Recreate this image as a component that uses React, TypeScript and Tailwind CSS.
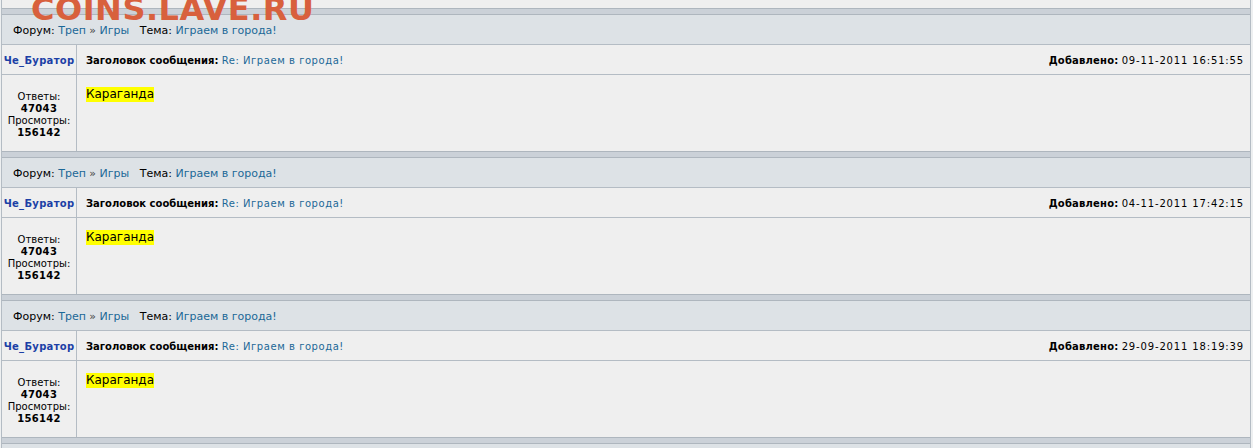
import { FC } from "react";

const posts = [
  { date: "09-11-2011 16:51:55" },
  { date: "04-11-2011 17:42:15" },
  { date: "29-09-2011 18:19:39" },
];

const Post: FC<{ date: string }> = ({ date }) => (
  <div>
    {/* separator bar */}
    <div className="h-[7px] border-y border-[#aeb6be] bg-[#cbd1d8]" />
    <div className="h-[30px] flex items-center pl-[11px] pt-[4px] bg-[#dde2e6] text-[11px] text-black border-b border-[#b4bcc4]">
      <span>Форум:&nbsp;</span>
      <a className="text-[#1b6897]">Треп</a>
      <span className="text-[#444]">&nbsp;»&nbsp;</span>
      <a className="text-[#1b6897]">Игры</a>
      <span>&nbsp;&nbsp;&nbsp;Тема:&nbsp;</span>
      <a className="text-[#1b6897]">Играем в города!</a>
    </div>
    <div className="h-[30px] flex bg-[#efefef] border-b border-[#b4bcc4] text-[10px]">
      <div className="w-[75px] shrink-0 flex items-center justify-center pt-[2px] border-r border-[#b4bcc4] font-bold text-[#1c3fa6] tracking-[0.3px]">
        Че_Буратор
      </div>
      <div className="flex-1 flex items-center justify-between pl-[9px] pr-[6px] pt-[2px]">
        <div>
          <b className="text-black">Заголовок сообщения:</b>{" "}
          <a className="text-[#1b6897] tracking-[0.55px]">Re: Играем в города!</a>
        </div>
        <div className="text-black">
          <b className="tracking-[0.2px]">Добавлено:</b>{" "}
          <span className="tracking-[0.85px]">{date}</span>
        </div>
      </div>
    </div>
    <div className="h-[76px] flex bg-[#efefef]">
      <div className="w-[75px] shrink-0 flex flex-col items-center justify-center border-r border-[#b4bcc4] text-[10px] leading-[12px] text-black pt-[3px]">
        <span>Ответы:</span>
        <b className="tracking-[0.3px]">47043</b>
        <span>Просмотры:</span>
        <b className="tracking-[0.3px]">156142</b>
      </div>
      <div className="flex-1 pl-[9px] pt-[12px] text-[12px] leading-[15px]">
        <span className="bg-[#ffff00] inline-block text-black">Караганда</span>
      </div>
    </div>
  </div>
);

const App: FC = () => {
  return (
    <div
      className="relative w-[1253px] h-[448px] overflow-hidden bg-[#eef0f1]"
      style={{ fontFamily: '"DejaVu Sans", Verdana, sans-serif' }}
    >
      <div className="ml-px mr-[2px] border-x border-[#b4bcc4] bg-[#efefef]">
        <div className="h-[8px]">
          <div className="w-[75px] h-full border-r border-[#b4bcc4]" />
        </div>
        {posts.map((p, i) => (
          <Post key={i} date={p.date} />
        ))}
        <div className="h-[7px] border-y border-[#aeb6be] bg-[#cbd1d8]" />
        <div className="h-[10px] bg-[#dde2e6]" />
      </div>
      {/* watermark */}
      <div className="absolute left-[31px] top-[-11px] text-[32px] font-bold leading-[40px] text-[#d8603d] tracking-[0.5px] pointer-events-none">
        COINS.LAVE.RU
      </div>
    </div>
  );
};

export default App;
